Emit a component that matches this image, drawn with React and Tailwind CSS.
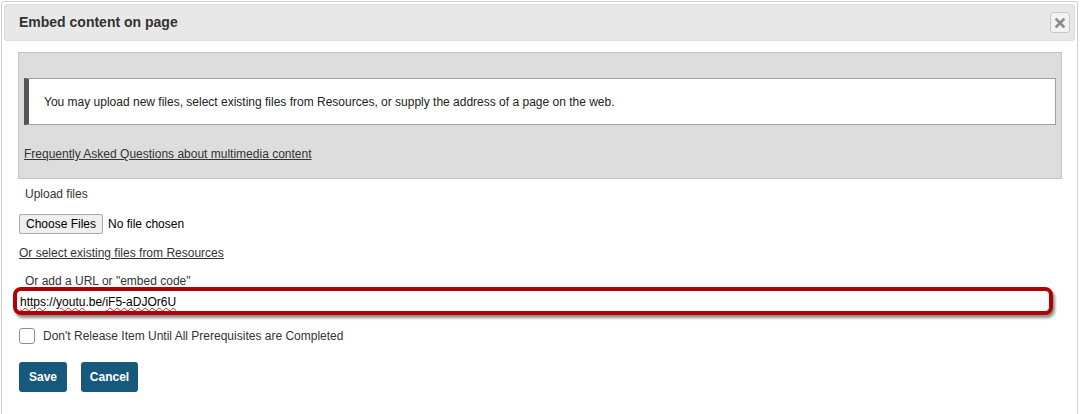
import React from "react";

const Wavy = ({ children }) => (
  <span className="underline decoration-wavy decoration-[#e02020] decoration-[1px] underline-offset-[1px]">
    {children}
  </span>
);

const App = () => {
  return (
    <div className="w-[1080px] h-[414px] bg-white overflow-hidden font-['Liberation_Sans',Arial,sans-serif] text-[12px] text-[#333]">
      <div className="ml-[1px] mt-[1px] w-[1077px] h-[420px] border border-[#cfcfcf] rounded-[3px] p-[2px]">
        {/* header */}
        <div className="h-[37px] bg-[#e8e8e8] border border-[#dcdcdc] rounded-[3px] flex items-center justify-between pl-[14px] pr-[4px]">
          <h1 className="text-[14px] font-bold text-[#333]">Embed content on page</h1>
          <button className="w-[20px] h-[21px] border border-[#c8c8c8] rounded-[3px] bg-[#f2f2f2] flex items-center justify-center">
            <svg width="10" height="10" viewBox="0 0 10 10">
              <path d="M1.5 1.5 L8.5 8.5 M8.5 1.5 L1.5 8.5" stroke="#8a8a8a" strokeWidth="2.6" strokeLinecap="square" />
            </svg>
          </button>
        </div>

        {/* body */}
        <div className="pl-[14px] pt-[11px]">
          <div className="w-[1044px] h-[127px] bg-[#dddddd] border border-[#c4c4c4] px-[5px] pt-[25px]">
            <div className="h-[47px] bg-white border border-[#a0a0a0] border-l-[5px] border-l-[#555] flex items-center pl-[15px] text-[#222]">
              You may upload new files, select existing files from Resources, or supply the address of a page on the web.
            </div>
            <a href="#" className="block mt-[21px] underline text-[#333] leading-[16px]">
              Frequently Asked Questions about multimedia content
            </a>
          </div>

          <div className="pl-[1px]">
            <div className="mt-[7px] pl-[6px] leading-[16px]">Upload files</div>
            <div className="mt-[12px] flex items-center gap-[5px]">
              <button className="h-[20px] px-[6px] border border-[#a9a9a9] rounded-[2px] bg-[#efefef] text-[12px] text-black">
                Choose Files
              </button>
              <span className="text-black">No file chosen</span>
            </div>
            <a href="#" className="block mt-[11px] underline text-[#333] leading-[16px]">
              Or select existing files from Resources
            </a>
            <div className="mt-[12px] pl-[6px] leading-[16px]">Or add a URL or "embed code"</div>
          </div>

          <div className="-ml-[5px] -mt-[2px] w-[1040px] h-[28px] border-[4px] border-[#b00000] rounded-[8px] shadow-[2px_3px_3px_rgba(0,0,0,0.45)] bg-white flex items-center pl-[3px] pt-[1px] text-black">
            <Wavy>https</Wavy>://<Wavy>youtu</Wavy>.be/<Wavy>iF5-aDJOr6U</Wavy>
          </div>

          <div className="mt-[12px] pl-[1px] flex items-center gap-[8px]">
            <span className="w-[16px] h-[16px] border border-[#8f8f8f] rounded-[3px] bg-white" />
            <span className="text-[#333]">Don't Release Item Until All Prerequisites are Completed</span>
          </div>

          <div className="mt-[17px] pl-[1px] flex gap-[14px]">
            <button className="w-[48px] h-[30px] bg-[#17587d] rounded-[3px] text-white font-bold text-[12px]">Save</button>
            <button className="w-[57px] h-[30px] bg-[#17587d] rounded-[3px] text-white font-bold text-[12px]">Cancel</button>
          </div>
        </div>
      </div>
    </div>
  );
};

export default App;
